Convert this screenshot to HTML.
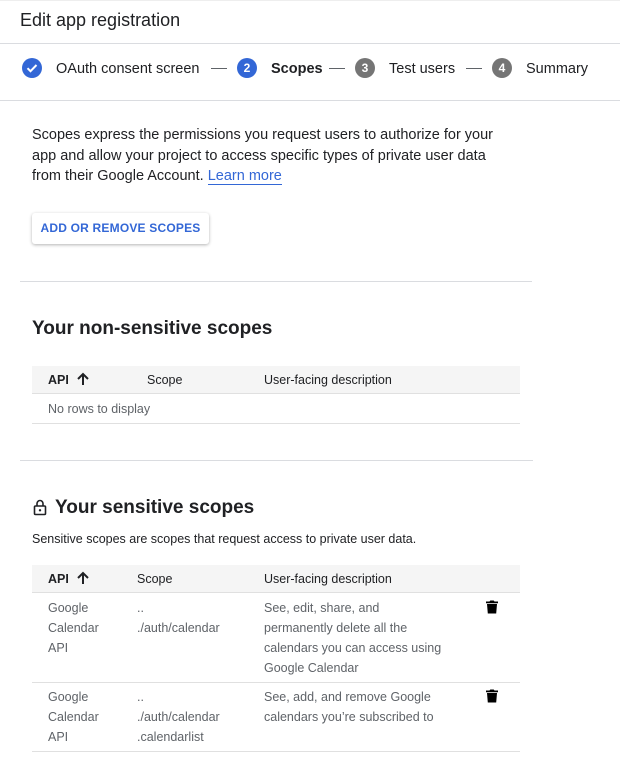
<!DOCTYPE html>
<html><head><meta charset="utf-8"><style>
*{margin:0;padding:0;box-sizing:border-box}
body{width:620px;height:771px;background:#fff;font-family:"Liberation Sans",sans-serif;color:#202124;position:relative;overflow:hidden}
.a{position:absolute;white-space:nowrap}
.hl{position:absolute;height:1px;background:#dadce0}
.circ{position:absolute;width:20px;height:20px;border-radius:50%;color:#fff;font-size:12px;font-weight:bold;text-align:center;line-height:20px}
.th{position:absolute;left:32px;width:488px;height:28px;background:#f5f5f5;border-bottom:1px solid #e0e0e0}
.th span{position:absolute;top:7px;font-size:12.5px;color:#202124}
.th svg{position:absolute;left:44px;top:6px}
.g{color:#5f6368;font-size:12.5px;line-height:20px}
</style></head><body>
<div class="hl" style="top:0;left:0;width:620px;background:#eee"></div>
<div class="a" style="left:20px;top:10px;font-size:18px">Edit app registration</div>
<div class="hl" style="top:43px;left:0;width:620px"></div>

<div class="circ" style="left:22px;top:58px;background:#3367d6"><svg width="20" height="20" viewBox="0 0 20 20"><path d="M5.5 10.2l3 3 6-6.2" stroke="#fff" stroke-width="2" fill="none"/></svg></div>
<div class="a" style="left:56px;top:61px;font-size:14.5px">OAuth consent screen</div>
<div class="a" style="left:211px;top:68px;width:16px;height:1px;background:#5f6368"></div>
<div class="circ" style="left:237px;top:58px;background:#3367d6">2</div>
<div class="a" style="left:271px;top:61px;font-size:14.5px;font-weight:bold">Scopes</div>
<div class="a" style="left:329px;top:68px;width:16px;height:1px;background:#5f6368"></div>
<div class="circ" style="left:355px;top:58px;background:#757575">3</div>
<div class="a" style="left:389px;top:61px;font-size:14.5px">Test users</div>
<div class="a" style="left:466px;top:68px;width:16px;height:1px;background:#5f6368"></div>
<div class="circ" style="left:492px;top:58px;background:#757575">4</div>
<div class="a" style="left:526px;top:61px;font-size:14.5px">Summary</div>
<div class="hl" style="top:100px;left:0;width:620px"></div>

<div class="a" style="left:32px;top:125px;font-size:14.5px;line-height:20.5px;white-space:normal;width:480px">Scopes express the permissions you request users to authorize for your app and allow your project to access specific types of private user data from their Google Account. <span style="color:#3367d6;border-bottom:1px solid #3367d6">Learn more</span></div>

<div class="a" style="left:32px;top:213px;width:177px;height:31px;border-radius:3px;box-shadow:0 1px 3px rgba(0,0,0,.3);color:#3367d6;font-size:12px;font-weight:bold;text-align:center;line-height:31px;letter-spacing:0.2px">ADD OR REMOVE SCOPES</div>

<div class="hl" style="top:281px;left:20px;width:512px"></div>
<div class="a" style="left:32px;top:318px;font-size:19px;font-weight:bold;color:#202124">Your non-sensitive scopes</div>
<div class="th" style="top:366px"><span style="left:16px;font-weight:bold">API</span><svg width="14" height="14" viewBox="0 0 14 14"><path d="M7 13V2M2 7l5-5 5 5" stroke="#202124" stroke-width="2" fill="none"/></svg><span style="left:115px">Scope</span><span style="left:232px">User-facing description</span></div>
<div class="a g" style="left:48px;top:399px">No rows to display</div>
<div class="hl" style="top:423px;left:32px;width:488px;background:#e0e0e0"></div>

<div class="hl" style="top:460px;left:20px;width:513px"></div>
<svg class="a" style="left:33px;top:499px" width="14" height="17" viewBox="0 0 14 17"><rect x="1.5" y="7" width="11" height="8.5" rx="1" fill="none" stroke="#202124" stroke-width="1.6"/><path d="M4 7V4.5a3 3 0 0 1 6 0V7" fill="none" stroke="#202124" stroke-width="1.6"/><circle cx="7" cy="11.3" r="1.2" fill="#202124"/></svg>
<div class="a" style="left:55px;top:497px;font-size:19px;font-weight:bold">Your sensitive scopes</div>
<div class="a" style="left:32px;top:532px;font-size:12.5px">Sensitive scopes are scopes that request access to private user data.</div>

<div class="th" style="top:565px"><span style="left:16px;font-weight:bold">API</span><svg width="14" height="14" viewBox="0 0 14 14"><path d="M7 13V2M2 7l5-5 5 5" stroke="#202124" stroke-width="2" fill="none"/></svg><span style="left:105px">Scope</span><span style="left:232px">User-facing description</span></div>

<div class="a g" style="left:48px;top:598px">Google<br>Calendar<br>API</div>
<div class="a g" style="left:137px;top:598px">..<br>./auth/calendar</div>
<div class="a g" style="left:264px;top:598px">See, edit, share, and<br>permanently delete all the<br>calendars you can access using<br>Google Calendar</div>
<svg class="a" style="left:486px;top:600px" width="12" height="14" viewBox="0 0 12 14"><path d="M0 1.5h3.5L4.3.5h3.4l.8 1h3.5v1.7H0zM1 4h10l-.8 9.5H1.8z" fill="#000"/></svg>
<div class="hl" style="top:682px;left:32px;width:488px;background:#e0e0e0"></div>

<div class="a g" style="left:48px;top:687px">Google<br>Calendar<br>API</div>
<div class="a g" style="left:137px;top:687px">..<br>./auth/calendar<br>.calendarlist</div>
<div class="a g" style="left:264px;top:687px">See, add, and remove Google<br>calendars you’re subscribed to</div>
<svg class="a" style="left:486px;top:689px" width="12" height="14" viewBox="0 0 12 14"><path d="M0 1.5h3.5L4.3.5h3.4l.8 1h3.5v1.7H0zM1 4h10l-.8 9.5H1.8z" fill="#000"/></svg>
<div class="hl" style="top:751px;left:32px;width:488px;background:#e0e0e0"></div>
</body></html>
